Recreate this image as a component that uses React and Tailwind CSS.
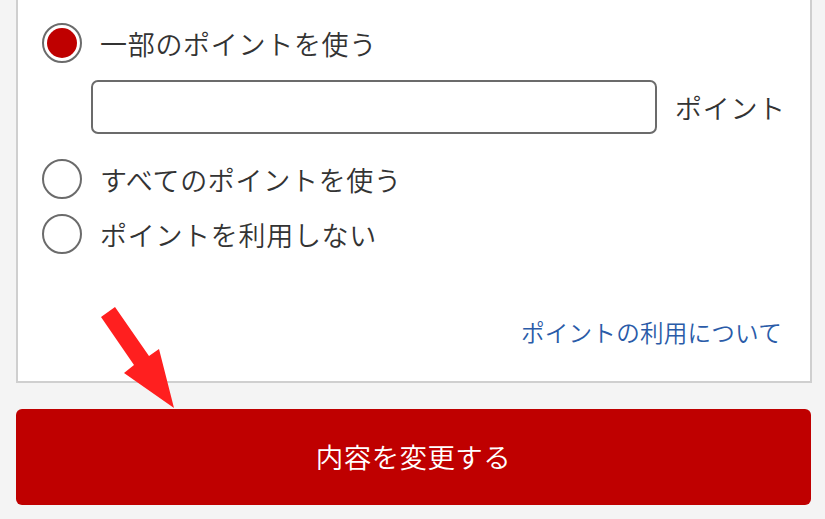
import React from 'react'

const FONT = { fontFamily: '"Noto Sans CJK JP", "Noto Sans", sans-serif' }

function Radio({ checked }) {
  return (
    <span className="w-[40px] h-[40px] shrink-0 rounded-full border-2 border-[#6b6b6b] bg-white flex items-center justify-center">
      {checked && <span className="w-[30px] h-[30px] rounded-full bg-[#bf0000]" />}
    </span>
  )
}

function Option({ checked, label, className = '' }) {
  return (
    <label className={`h-[40px] flex items-center gap-[18px] ${className}`}>
      <Radio checked={checked} />
      <span className="text-[27px] leading-none tracking-[0.7px] font-[350] text-[#333] whitespace-nowrap">{label}</span>
    </label>
  )
}

export default function App() {
  return (
    <div className="relative w-[825px] h-[519px] bg-[#f4f4f4] overflow-hidden" style={FONT}>
      {/* ポイント利用カード */}
      <div className="ml-[16px] mr-[13px] bg-white border-2 border-t-0 border-[#cfcfcf] pt-[23px] pl-[24px] pr-[28px] pb-[32px]">
        <Option checked label="一部のポイントを使う" />
        <div className="mt-[17px] ml-[49px] flex items-center gap-[18px]">
          <div className="w-[566px] h-[54px] shrink-0 rounded-[7px] border-2 border-[#6b6b6b] bg-white" />
          <span className="text-[27px] leading-none tracking-[0.7px] font-[350] text-[#333] whitespace-nowrap">ポイント</span>
        </div>
        <Option className="mt-[25px]" label="すべてのポイントを使う" />
        <Option className="mt-[15px]" label="ポイントを利用しない" />
        <div className="mt-[63px] h-[32px] flex items-center justify-end">
          <a className="text-[23.6px] leading-none font-[350] tracking-[0.2px] text-[#2a5ba8] whitespace-nowrap">ポイントの利用について</a>
        </div>
      </div>

      {/* 変更ボタン */}
      <button className="mt-[26px] ml-[16px] w-[795px] h-[96px] rounded-[6px] bg-[#bf0000] text-white text-[27.5px] leading-none font-[350] tracking-[0.4px] flex items-center justify-center">
        内容を変更する
      </button>

      {/* 注釈の矢印 */}
      <svg className="absolute left-0 top-0 pointer-events-none" width="825" height="519" viewBox="0 0 825 519">
        <polygon
          points="101,317 115,307 149,356 159,349 174,408 124,373 134,365"
          fill="#ff1f1f"
        />
      </svg>
    </div>
  )
}
